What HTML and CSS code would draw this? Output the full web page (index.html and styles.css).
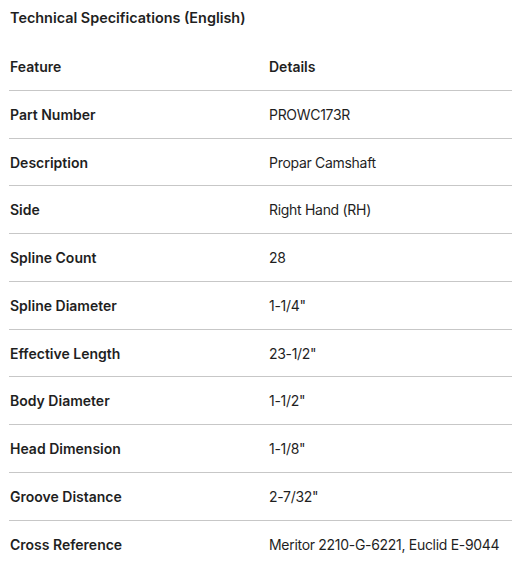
FILE: index.html
```html
<!DOCTYPE html>
<html lang="en">
<head>
<meta charset="utf-8">
<title>Technical Specifications</title>
<link rel="stylesheet" href="styles.css">
</head>
<body>
<div class="wrap">
  <h2 class="title">Technical Specifications (English)</h2>
  <table class="specs">
    <thead>
      <tr><th class="c1">Feature</th><th class="c2">Details</th></tr>
    </thead>
    <tbody>
      <tr><th>Part Number</th><td>PROWC173R</td></tr>
      <tr><th>Description</th><td>Propar Camshaft</td></tr>
      <tr><th>Side</th><td>Right Hand (RH)</td></tr>
      <tr><th>Spline Count</th><td>28</td></tr>
      <tr><th>Spline Diameter</th><td>1-1/4"</td></tr>
      <tr><th>Effective Length</th><td>23-1/2"</td></tr>
      <tr><th>Body Diameter</th><td>1-1/2"</td></tr>
      <tr><th>Head Dimension</th><td>1-1/8"</td></tr>
      <tr><th>Groove Distance</th><td>2-7/32"</td></tr>
      <tr><th>Cross Reference</th><td>Meritor 2210-G-6221, Euclid E-9044</td></tr>
    </tbody>
  </table>
</div>
</body>
</html>
```
FILE: styles.css
```css
html, body {
  margin: 0;
  padding: 0;
  background: #ffffff;
}
body {
  font-family: Inter, "Noto Sans", "Liberation Sans", sans-serif;
  font-size: 14px;
  color: #1f1f1f;
  overflow: hidden;
}
.wrap {
  padding-left: 9px;
}
.title {
  margin: 0;
  padding-top: 7px;
  font-size: 14.4px;
  line-height: 22px;
  font-weight: 600;
  margin-bottom: 14px;
  padding-left: 1px;
}
.specs {
  border-collapse: collapse;
  width: 520px;
  table-layout: fixed;
}
.specs .c1 {
  width: 258px;
}
.specs th,
.specs td {
  text-align: left;
  padding: 13px 0 11px 1px;
  line-height: 22.78px;
  vertical-align: middle;
}
.specs th {
  font-weight: 600;
}
.specs td {
  font-weight: 400;
  letter-spacing: -0.3px;
}
.specs tr {
  border-bottom: 1px solid #c7c7c7;
}
.specs tbody tr:last-child {
  border-bottom: none;
}
```
